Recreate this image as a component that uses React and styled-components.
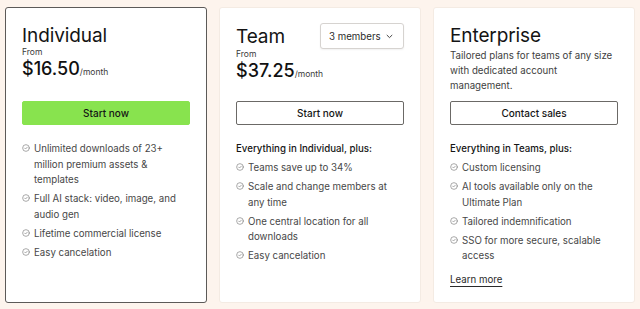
import React, { useState } from 'react';
import styled, { createGlobalStyle } from 'styled-components';

const GlobalStyle = createGlobalStyle`
  html, body {
    margin: 0;
    padding: 0;
    background: #fdf4ed;
  }
  * {
    box-sizing: border-box;
  }
`;

const Page = styled.div`
  height: 309px;
  padding: 7px 5px 6px;
  display: flex;
  gap: 12px;
  font-family: Inter, "Liberation Sans", sans-serif;
  color: #1c1c1c;
`;

const Card = styled.div`
  flex: 1;
  min-width: 0;
  background: #fff;
  border: 1px solid ${(p) => (p.$active ? '#5c5a58' : '#f4ebe3')};
  border-radius: 3px;
  padding: 16px 16px;
  display: flex;
  flex-direction: column;
`;

const Head = styled.div`
  flex: none;
  height: 69px;
  display: flex;
  flex-direction: column;
`;

const TitleRow = styled.div`
  display: flex;
  align-items: center;
  justify-content: space-between;
  margin-top: -1px;
  height: 26px;
`;

const Title = styled.h2`
  margin: 0;
  font-size: 19px;
  line-height: 23px;
  font-weight: 400;
  letter-spacing: -0.1px;
  color: #141414;
`;

const Select = styled.button`
  flex: none;
  display: flex;
  align-items: center;
  justify-content: space-between;
  height: 26px;
  width: 84px;
  padding: 0 10px 0 8px;
  background: #fff;
  border: 1px solid #d6d3d0;
  border-radius: 3px;
  box-shadow: 0 1px 2px rgba(0, 0, 0, 0.06);
  font-family: inherit;
  font-size: 9.7px;
  white-space: nowrap;
  color: #2a2a2a;
  cursor: pointer;
`;

const From = styled.div`
  font-size: 8.5px;
  line-height: 11px;
  color: #3a3a3a;
`;

const Price = styled.div`
  display: flex;
  align-items: baseline;
  font-size: 18px;
  line-height: 22px;
  font-weight: 500;
  color: #111;
`;

const Per = styled.span`
  font-size: 8.5px;
  font-weight: 400;
  color: #3a3a3a;
`;

const Desc = styled.p`
  margin: 1px 0 0;
  font-size: 9.7px;
  line-height: 15px;
  color: #3e3e3e;
`;

const Button = styled.button`
  flex: none;
  height: 24px;
  margin-top: 8px;
  width: 100%;
  border-radius: 2px;
  border: 1px solid ${(p) => (p.$primary ? '#88e34e' : '#6b6966')};
  background: ${(p) => (p.$primary ? '#88e34e' : '#fff')};
  font-family: inherit;
  font-size: 10px;
  font-weight: 500;
  color: #151515;
  cursor: pointer;
`;

const Features = styled.div`
  margin-top: 16px;
  display: flex;
  flex-direction: column;
  gap: 4px;
`;

const FeatureHead = styled.div`
  font-size: 9.7px;
  line-height: 15px;
  font-weight: 500;
  color: #151515;
`;

const List = styled.ul`
  list-style: none;
  margin: 0;
  padding: 0;
  display: flex;
  flex-direction: column;
  gap: 3.5px;
`;

const Item = styled.li`
  display: flex;
  gap: 4px;
  font-size: 9.7px;
  line-height: 15.5px;
  color: #474747;

  svg {
    flex: none;
    margin-top: 3px;
  }
`;

const LearnMore = styled.a`
  margin-top: 4px;
  align-self: flex-start;
  font-size: 9.7px;
  line-height: 15px;
  color: #2a2a2a;
  text-decoration: underline;
  text-underline-offset: 3px;
  text-decoration-thickness: 1px;
  cursor: pointer;
`;

const Check = () => (
  <svg width="8" height="8" viewBox="0 0 16 16" fill="none" stroke="#858585" strokeWidth="1.4" strokeLinecap="round" strokeLinejoin="round">
    <circle cx="8" cy="8" r="6.7" />
    <path d="M5.3 8.2l1.8 1.8 3.6-3.7" />
  </svg>
);

const Chevron = () => (
  <svg width="7" height="5" viewBox="0 0 10 6" fill="none" stroke="#333" strokeWidth="1.3" strokeLinecap="round" strokeLinejoin="round">
    <path d="M1.5 1.2L5 4.6l3.5-3.4" />
  </svg>
);

const plans = [
  {
    name: 'Individual',
    price: '$16.50',
    cta: 'Start now',
    primary: true,
    items: [
      'Unlimited downloads of 23+ million premium assets & templates',
      'Full AI stack: video, image, and audio gen',
      'Lifetime commercial license',
      'Easy cancelation',
    ],
  },
  {
    name: 'Team',
    price: '$37.25',
    cta: 'Start now',
    members: true,
    heading: 'Everything in Individual, plus:',
    items: [
      'Teams save up to 34%',
      'Scale and change members at any time',
      'One central location for all downloads',
      'Easy cancelation',
    ],
  },
  {
    name: 'Enterprise',
    desc: 'Tailored plans for teams of any size with dedicated account management.',
    cta: 'Contact sales',
    heading: 'Everything in Teams, plus:',
    learnMore: true,
    items: [
      'Custom licensing',
      'AI tools available only on the Ultimate Plan',
      'Tailored indemnification',
      'SSO for more secure, scalable access',
    ],
  },
];

export default function App() {
  const [members] = useState(3);

  return (
    <>
      <GlobalStyle />
      <Page>
        {plans.map((plan) => (
          <Card key={plan.name} $active={plan.primary}>
            <Head>
              {plan.members ? (
                <TitleRow>
                  <Title>{plan.name}</Title>
                  <Select>
                    {members} members
                    <Chevron />
                  </Select>
                </TitleRow>
              ) : (
                <Title>{plan.name}</Title>
              )}
              {plan.price && (
                <>
                  <From>From</From>
                  <Price>
                    {plan.price}
                    <Per>/month</Per>
                  </Price>
                </>
              )}
              {plan.desc && <Desc>{plan.desc}</Desc>}
            </Head>
            <Button $primary={plan.primary}>{plan.cta}</Button>
            <Features>
              {plan.heading && <FeatureHead>{plan.heading}</FeatureHead>}
              <List>
                {plan.items.map((text) => (
                  <Item key={text}>
                    <Check />
                    <span>{text}</span>
                  </Item>
                ))}
              </List>
              {plan.learnMore && <LearnMore>Learn more</LearnMore>}
            </Features>
          </Card>
        ))}
      </Page>
    </>
  );
}
